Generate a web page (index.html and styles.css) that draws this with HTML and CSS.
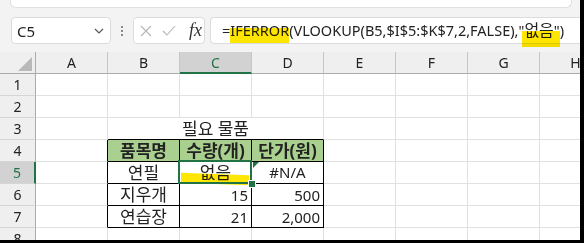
FILE: index.html
```html
<!DOCTYPE html>
<html lang="ko">
<head>
    <meta charset="UTF-8">
    <title>Excel - IFERROR</title>
    <link rel="stylesheet" href="styles.css">
</head>
<body>
    <div class="window">
        <div class="ribbon"></div>

        <div class="formula-bar">
            <div class="name-box">
                <span>C5</span>
                <svg width="10" height="6" viewBox="0 0 10 6"><path d="M1 1 L5 5 L9 1" fill="none" stroke="#555" stroke-width="1.2"/></svg>
            </div>
            <div class="grip"><i></i><i></i><i></i></div>
            <div class="fx-buttons">
                <svg width="12" height="12" viewBox="0 0 12 12"><path d="M1 1 L11 11 M11 1 L1 11" stroke="#b5b5b5" stroke-width="1.1"/></svg>
                <svg width="14" height="11" viewBox="0 0 14 11"><path d="M1 6 L5 10 L13 1" fill="none" stroke="#b5b5b5" stroke-width="1.1"/></svg>
                <span class="fx">fx</span>
            </div>
            <div class="formula">=<span class="hl hl-a">IFERROR</span>(VLOOKUP(B5,$I$5:$K$7,2,FALSE),"<span class="hl hl-b ko">없음</span>")</div>
        </div>

        <div class="sheet">
            <!-- column headers -->
            <div class="hd corner"><span class="tri"></span></div>
            <div class="hd col">A</div>
            <div class="hd col">B</div>
            <div class="hd col sel-col">C</div>
            <div class="hd col">D</div>
            <div class="hd col">E</div>
            <div class="hd col">F</div>
            <div class="hd col">G</div>
            <div class="hd col">H</div>

            <!-- row 1 -->
            <div class="hd row">1</div>
            <div class="c"></div><div class="c"></div><div class="c"></div><div class="c"></div>
            <div class="c"></div><div class="c"></div><div class="c"></div><div class="c"></div>

            <!-- row 2 -->
            <div class="hd row">2</div>
            <div class="c"></div><div class="c"></div><div class="c"></div><div class="c"></div>
            <div class="c"></div><div class="c"></div><div class="c"></div><div class="c"></div>

            <!-- row 3 -->
            <div class="hd row">3</div>
            <div class="c"></div>
            <div class="c bb title ko">필요 물품</div>
            <div class="c"></div>
            <div class="c"></div><div class="c"></div><div class="c"></div>

            <!-- row 4 -->
            <div class="hd row">4</div>
            <div class="c br"></div>
            <div class="c tb head ko">품목명</div>
            <div class="c tb head ko">수량(개)</div>
            <div class="c tb head ko">단가(원)</div>
            <div class="c"></div><div class="c"></div><div class="c"></div><div class="c"></div>

            <!-- row 5 -->
            <div class="hd row sel-row">5</div>
            <div class="c br"></div>
            <div class="c tb mid ko">연필</div>
            <div class="c tb mid ko active"><span class="marker"></span>없음<span class="handle"></span></div>
            <div class="c tb mid err">#N/A</div>
            <div class="c"></div><div class="c"></div><div class="c"></div><div class="c"></div>

            <!-- row 6 -->
            <div class="hd row">6</div>
            <div class="c br"></div>
            <div class="c tb mid ko">지우개</div>
            <div class="c tb num">15</div>
            <div class="c tb num">500</div>
            <div class="c"></div><div class="c"></div><div class="c"></div><div class="c"></div>

            <!-- row 7 -->
            <div class="hd row">7</div>
            <div class="c br"></div>
            <div class="c tb mid ko">연습장</div>
            <div class="c tb num">21</div>
            <div class="c tb num">2,000</div>
            <div class="c"></div><div class="c"></div><div class="c"></div><div class="c"></div>

            <!-- row 8 -->
            <div class="hd row">8</div>
            <div class="c"></div><div class="c"></div><div class="c"></div><div class="c"></div>
            <div class="c"></div><div class="c"></div><div class="c"></div><div class="c"></div>
        </div>
    </div>
</body>
</html>
```

FILE: styles.css
```css
body {
    margin: 0;
    background: #000;
    font-family: "Noto Sans", "Noto Sans CJK KR", sans-serif;
    color: #222;
}
.window {
    width: 580px;
    height: 240px;
    background: #f3f3f3;
    overflow: hidden;
}
.ribbon {
    margin: 0 8px 0 10px;
    height: 8px;
    box-sizing: border-box;
    background: #fff;
    border: 1px solid #e0e0e0;
    border-top: none;
    border-radius: 0 0 6px 6px;
}

/* formula bar */
.formula-bar {
    display: flex;
    align-items: center;
    height: 27px;
    margin-top: 9px;
    padding-left: 11px;
}
.name-box {
    width: 100px;
    height: 27px;
    box-sizing: border-box;
    display: flex;
    align-items: center;
    justify-content: space-between;
    padding: 0 6px 0 5px;
    background: #fff;
    border: 1px solid #dcdcdc;
    border-radius: 4px;
    font-size: 15px;
}
.grip {
    display: flex;
    flex-direction: column;
    gap: 2px;
    margin-left: 10px;
}
.grip i {
    width: 2px;
    height: 2px;
    background: #8a8a8a;
}
.fx-buttons {
    width: 72px;
    height: 27px;
    box-sizing: border-box;
    margin-left: 10px;
    display: flex;
    align-items: center;
    gap: 10px;
    padding-left: 6px;
    background: #fff;
    border: 1px solid #dcdcdc;
    border-radius: 4px;
}
.fx {
    font-family: "Liberation Serif", serif;
    font-style: italic;
    font-size: 18px;
    color: #333;
    margin-left: 3px;
}
.formula {
    flex: 1;
    height: 27px;
    box-sizing: border-box;
    margin-left: 5px;
    padding-left: 11px;
    line-height: 25px;
    white-space: nowrap;
    background: #fff;
    border: 1px solid #dcdcdc;
    border-right: none;
    border-radius: 4px 0 0 4px;
    font-size: 14.5px;
}
.formula .ko {
    font-size: 16px;
}
.hl {
    position: relative;
}
.hl::after {
    content: "";
    position: absolute;
    background: #ffe600;
    mix-blend-mode: multiply;
}
.hl-a::after {
    left: 0;
    right: 0;
    top: 8px;
    bottom: -3px;
}
.hl-b::after {
    left: -2px;
    right: -6px;
    top: 12px;
    bottom: -6px;
}

/* sheet */
.sheet {
    margin-top: 8px;
    display: grid;
    grid-template-columns: 36px repeat(8, 72px);
    grid-auto-rows: 22px;
    background: #fff;
}
.sheet > div {
    box-sizing: border-box;
    border-right: 1px solid #e1e1e1;
    border-bottom: 1px solid #e1e1e1;
    line-height: 21px;
    font-size: 15px;
    white-space: nowrap;
}
.sheet > .ko {
    font-size: 17px;
}
.sheet .hd {
    background: #efefef;
    color: #222;
    font-size: 14px;
    text-align: center;
}
.sheet .col {
    border-right-color: #c6c6c6;
    border-bottom-color: #ababab;
}
.sheet .row {
    border-right-color: #ababab;
    border-bottom-color: #d5d5d5;
}
.sheet .corner {
    position: relative;
    border-right-color: #ababab;
    border-bottom-color: #ababab;
}
.tri {
    position: absolute;
    right: 3px;
    bottom: 2px;
    width: 0;
    height: 0;
    border-left: 14px solid transparent;
    border-bottom: 14px solid #b9b9b9;
}
.sheet .sel-col {
    background: #d2d2d2;
    color: #217346;
    border-bottom: 2px solid #217346;
}
.sheet .sel-row {
    background: #d2d2d2;
    color: #217346;
    border-right: 2px solid #217346;
}

.sheet .bb {
    border-bottom-color: #000;
}
.sheet .br {
    border-right-color: #000;
}
.sheet .tb {
    border-right-color: #000;
    border-bottom-color: #000;
}
.title {
    grid-column: span 3;
    text-align: center;
}
.head {
    background: #a9d08e;
    font-weight: bold;
    text-align: center;
}
.mid {
    text-align: center;
}
.num {
    text-align: right;
    padding: 1px 3px 0 0;
}

/* active cell */
.active {
    position: relative;
}
.active::after {
    content: "";
    position: absolute;
    left: -2px;
    top: -2px;
    right: -1px;
    bottom: -1px;
    border: 2px solid #217346;
}
.marker {
    position: absolute;
    left: 1px;
    right: 2px;
    top: 12px;
    height: 10px;
    background: #ffe600;
    mix-blend-mode: multiply;
    transform: skewY(2deg);
}
.handle {
    position: absolute;
    right: -5px;
    bottom: -5px;
    width: 6px;
    height: 6px;
    background: #217346;
    border: 1px solid #fff;
    z-index: 2;
}
.err {
    position: relative;
}
.err::before {
    content: "";
    position: absolute;
    left: 1px;
    top: 0;
    border-top: 6px solid #217346;
    border-right: 6px solid transparent;
}
```
